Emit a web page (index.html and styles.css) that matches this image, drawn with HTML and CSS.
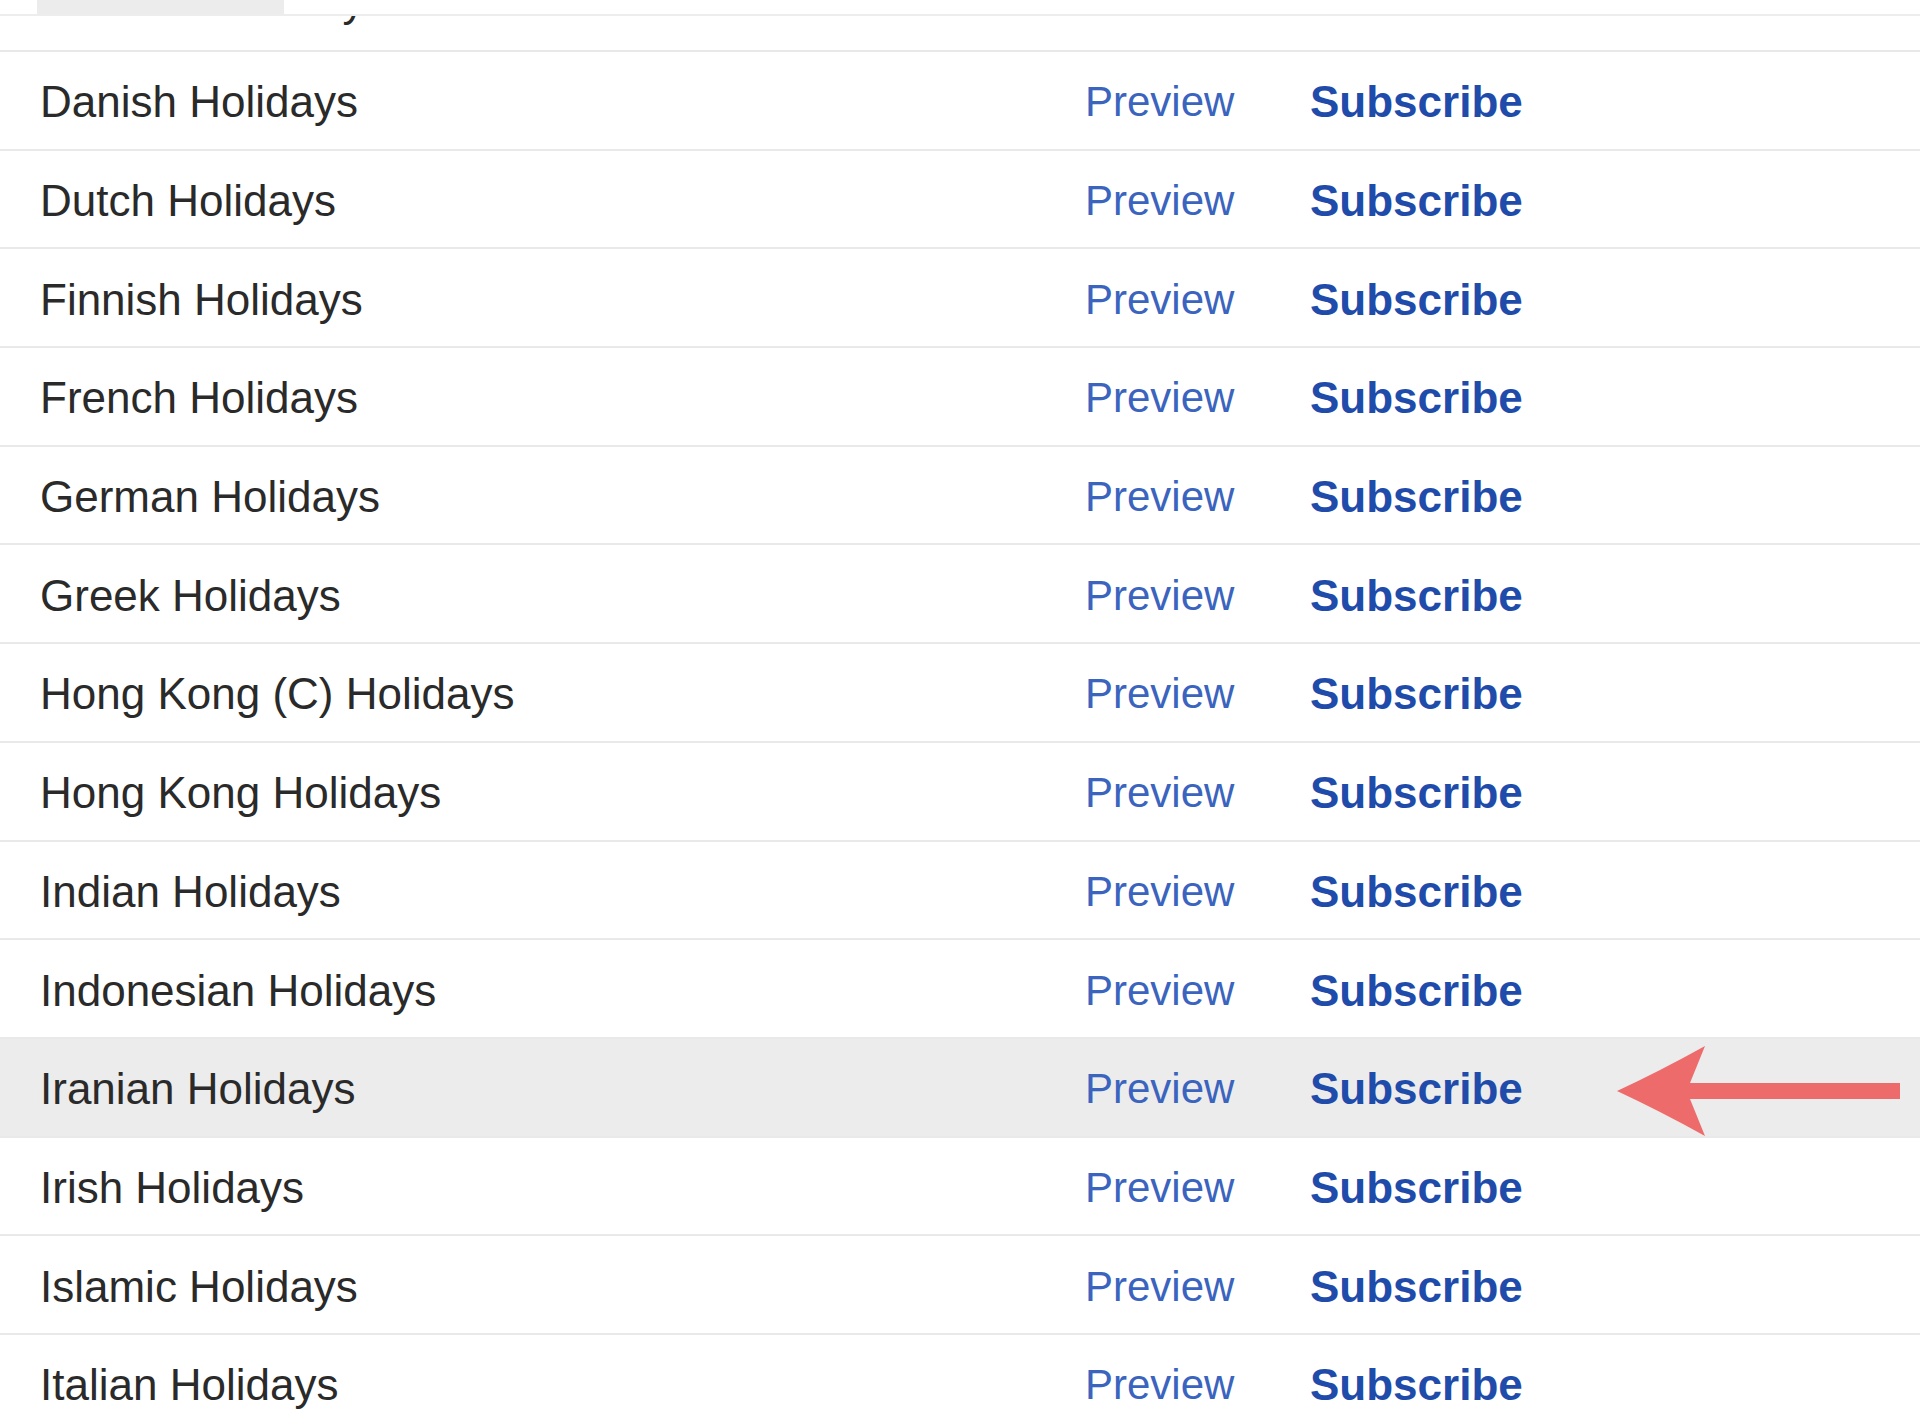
FILE: index.html
```html
<!DOCTYPE html>
<html>
<head>
<link rel="stylesheet" href="styles.css">
</head>
<body>

<div class="calendars">
  <div class="stub">
    <div class="stub-top"><div class="stub-tab"></div></div>
    <div class="stub-cut"><span class="stub-name">Christian Holidays</span></div>
  </div>

  <div class="row"><span class="name">Danish Holidays</span><a class="preview">Preview</a><a class="subscribe">Subscribe</a></div>
  <div class="row"><span class="name">Dutch Holidays</span><a class="preview">Preview</a><a class="subscribe">Subscribe</a></div>
  <div class="row"><span class="name">Finnish Holidays</span><a class="preview">Preview</a><a class="subscribe">Subscribe</a></div>
  <div class="row"><span class="name">French Holidays</span><a class="preview">Preview</a><a class="subscribe">Subscribe</a></div>
  <div class="row"><span class="name">German Holidays</span><a class="preview">Preview</a><a class="subscribe">Subscribe</a></div>
  <div class="row"><span class="name">Greek Holidays</span><a class="preview">Preview</a><a class="subscribe">Subscribe</a></div>
  <div class="row"><span class="name">Hong Kong (C) Holidays</span><a class="preview">Preview</a><a class="subscribe">Subscribe</a></div>
  <div class="row"><span class="name">Hong Kong Holidays</span><a class="preview">Preview</a><a class="subscribe">Subscribe</a></div>
  <div class="row"><span class="name">Indian Holidays</span><a class="preview">Preview</a><a class="subscribe">Subscribe</a></div>
  <div class="row"><span class="name">Indonesian Holidays</span><a class="preview">Preview</a><a class="subscribe">Subscribe</a></div>
  <div class="row selected">
    <span class="name">Iranian Holidays</span><a class="preview">Preview</a><a class="subscribe">Subscribe</a>
    <svg class="arrow" width="300" height="100" viewBox="0 0 300 100">
      <path d="M17 52 Q60 32 105 7 L90 44 L305 44 L305 60 L90 60 L105 97 Q60 72 17 52 Z" fill="#ee6b6b"/>
    </svg>
  </div>
  <div class="row"><span class="name">Irish Holidays</span><a class="preview">Preview</a><a class="subscribe">Subscribe</a></div>
  <div class="row"><span class="name">Islamic Holidays</span><a class="preview">Preview</a><a class="subscribe">Subscribe</a></div>
  <div class="row"><span class="name">Italian Holidays</span><a class="preview">Preview</a><a class="subscribe">Subscribe</a></div>
</div>

</body>
</html>
```

FILE: styles.css
```css
body {
  margin: 0;
  background: #fff;
  font-family: "Liberation Sans", Arial, sans-serif;
  overflow: hidden;
}

.calendars {
  width: 100%;
}

.stub {
  height: 52px;
  box-sizing: border-box;
  border-bottom: 2px solid #e8e8e8;
}

.stub-top {
  border-bottom: 2px solid #ededed;
}

.stub-tab {
  margin-left: 37px;
  width: 247px;
  height: 14px;
  background: #ececec;
}

.stub-cut {
  height: 18px;
  overflow: hidden;
  padding-left: 32px;
}

.stub-name {
  display: block;
  margin-top: -40px;
  font-size: 44px;
  line-height: 50px;
  color: #2a2a2a;
}

.row {
  position: relative;
  display: grid;
  grid-template-columns: 1085px 225px 1fr;
  align-items: center;
  height: 98.7px;
  box-sizing: border-box;
  padding-top: 4px;
  border-bottom: 2px solid #e9e9e9;
  font-size: 44px;
}

.row.selected {
  background: #ececec;
}

.name {
  padding-left: 40px;
  color: #2a2a2a;
}

.preview {
  color: #3a64be;
  font-size: 42px;
}

.subscribe {
  color: #1f4caa;
  font-weight: bold;
}

.arrow {
  position: absolute;
  left: 1600px;
  top: 0;
}
```
